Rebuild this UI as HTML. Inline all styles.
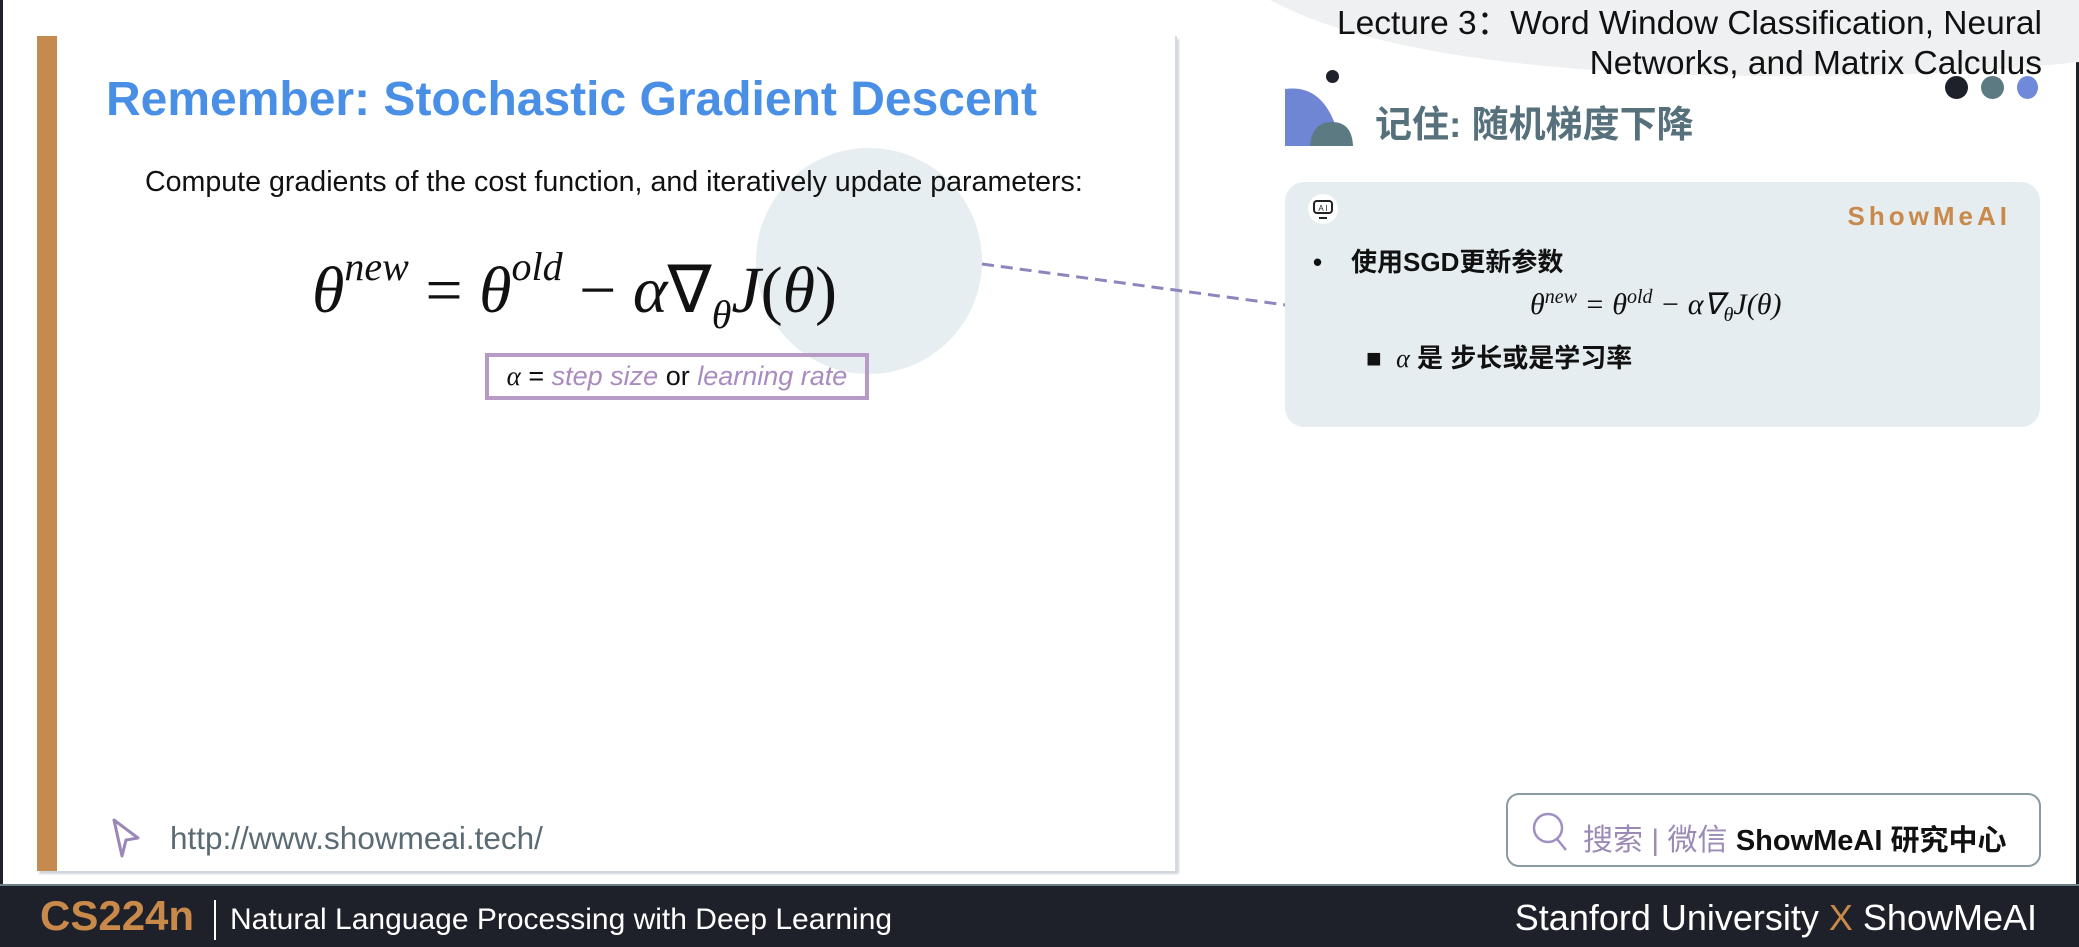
<!DOCTYPE html>
<html><head><meta charset="utf-8"><style>
body{margin:0;width:2079px;height:945px;overflow:hidden;background:#fff;position:relative;font-family:"Liberation Sans","Noto Sans CJK SC",sans-serif}
.a{position:absolute}
</style></head><body>
<div class="a" style="left:0;top:0;width:2079px;height:884px;background:#fff;border-left:3px solid #1e2129;border-right:3px solid #1e2129;box-sizing:border-box"></div>
<svg class="a" style="left:1270px;top:0" width="809" height="100"><path d="M0 0 Q120 65 420 75 Q650 80 809 62 L809 0 Z" fill="#eef0f2"/></svg>
<div class="a" style="left:37px;top:36px;width:1138px;height:835px;background:#fff;box-shadow:2px 3px 2px #cfd6db;border-right:2px solid #d5dbe0"></div>
<div class="a" style="left:37px;top:36px;width:20px;height:835px;background:#c48a50"></div>
<div class="a" style="left:756px;top:148px;width:226px;height:226px;border-radius:50%;background:#e3ebee;opacity:.85"></div>
<div class="a" style="left:106px;top:72px;font-size:48px;font-weight:bold;color:#4a8fe6;white-space:nowrap">Remember: Stochastic Gradient Descent</div>
<div class="a" style="left:145px;top:166px;font-size:28.6px;color:#111;white-space:nowrap">Compute gradients of the cost function, and iteratively update parameters:</div>
<div class="a" style="left:312px;top:243px;font-size:66px;font-family:'Liberation Serif',serif;font-style:italic;color:#111;white-space:nowrap">θ<sup style="font-size:40px;vertical-align:32px">new</sup>&nbsp;<span style="font-style:normal">=</span>&nbsp;θ<sup style="font-size:40px;vertical-align:32px">old</sup>&nbsp;<span style="font-style:normal">−</span>&nbsp;α<span style="font-style:normal">∇</span><sub style="font-size:40px;vertical-align:-16px">θ</sub>J<span style="font-style:normal">(</span>θ<span style="font-style:normal">)</span></div>
<div class="a" style="left:485px;top:353px;width:384px;height:47px;border:4px solid #b79bc6;box-sizing:border-box;font-size:27px;text-align:center;line-height:39px;color:#111;white-space:nowrap"><i style="font-family:'Liberation Serif',serif">α</i> = <i style="color:#a98bc0">step size</i> or <i style="color:#a98bc0">learning rate</i></div>
<svg class="a" style="left:0;top:0" width="1300" height="320"><line x1="982" y1="264" x2="1286" y2="305" stroke="#8c86bd" stroke-width="3" stroke-dasharray="12 7"/></svg>
<svg class="a" style="left:108px;top:816px" width="36" height="46"><path d="M6 4 L30 22 L18 24 L14 40 Z" fill="none" stroke="#9b86b8" stroke-width="3" stroke-linejoin="round"/></svg>
<div class="a" style="left:170px;top:820px;font-size:31.5px;color:#5b6b73;white-space:nowrap">http://www.showmeai.tech/</div>
<div class="a" style="right:37px;top:4px;font-size:33.5px;color:#111;text-align:right;line-height:40px;white-space:nowrap">Lecture 3：Word Window Classification, Neural<br>Networks, and Matrix Calculus</div>
<div class="a" style="left:1945px;top:76px;width:23px;height:23px;border-radius:50%;background:#1e2129"></div>
<div class="a" style="left:1981px;top:76px;width:23px;height:23px;border-radius:50%;background:#5b7a82"></div>
<div class="a" style="left:2017px;top:76px;width:21px;height:23px;border-radius:50%;background:#6f8ad8"></div>
<div class="a" style="left:1326px;top:70px;width:13px;height:13px;border-radius:50%;background:#1e2129"></div>
<svg class="a" style="left:1280px;top:84px" width="90" height="62"><path d="M5 62 L5 5 Q40 0 55 40 L60 62 Z" fill="#6f86d4"/><path d="M30 62 Q32 38 52 38 Q72 38 73 62 Z" fill="#5b7a82"/></svg>
<div class="a" style="left:1375px;top:94px;font-size:37px;font-weight:bold;color:#56707c;white-space:nowrap">记住: 随机梯度下降</div>
<div class="a" style="left:1285px;top:182px;width:755px;height:245px;border-radius:19px;background:#e6edf0"></div>
<svg class="a" style="left:1307px;top:193px" width="32" height="32"><circle cx="16" cy="16" r="15" fill="#fff"/><rect x="7" y="8" width="18" height="12" rx="3" fill="none" stroke="#222" stroke-width="2"/><line x1="12" y1="25" x2="20" y2="25" stroke="#222" stroke-width="2"/><text x="16" y="18" font-size="8" text-anchor="middle" fill="#222" font-family="Liberation Sans">A I</text></svg>
<div class="a" style="right:68px;top:201px;font-size:26px;font-weight:bold;color:#c8894a;letter-spacing:4px;white-space:nowrap">ShowMeAI</div>
<div class="a" style="left:1313px;top:242px;font-size:26px;color:#111;white-space:nowrap;font-weight:bold">•&nbsp;&nbsp;&nbsp;&nbsp;使用SGD更新参数</div>
<div class="a" style="left:1530px;top:286px;font-size:30px;font-family:'Liberation Serif',serif;font-style:italic;color:#111;white-space:nowrap">θ<sup style="font-size:20px">new</sup> = θ<sup style="font-size:20px">old</sup> − α∇<sub style="font-size:20px">θ</sub>J(θ)</div>
<div class="a" style="left:1366px;top:338px;font-size:26px;color:#111;white-space:nowrap;font-weight:bold">■&nbsp;&nbsp;<i style="font-family:'Liberation Serif',serif;font-weight:normal">α</i> 是 步长或是学习率</div>
<div class="a" style="left:1506px;top:793px;width:535px;height:74px;border:2px solid #8a9aa3;border-radius:13px;box-sizing:border-box"></div>
<svg class="a" style="left:1530px;top:808px" width="40" height="46"><circle cx="18" cy="20" r="14" fill="none" stroke="#a08fc0" stroke-width="2.5"/><line x1="27" y1="31" x2="36" y2="42" stroke="#a08fc0" stroke-width="2.5"/></svg>
<div class="a" style="left:1583px;top:815px;font-size:30px;color:#9a8ab5;white-space:nowrap">搜索 | 微信 <b style="color:#111;font-size:29px">ShowMeAI 研究中心</b></div>
<div class="a" style="left:0;top:884px;width:2079px;height:61px;background:#1e2129;border-top:2px solid #6b7f86"></div>
<div class="a" style="left:40px;top:892px;font-size:42px;color:#c8894a;white-space:nowrap;font-weight:bold">CS224n</div>
<div class="a" style="left:214px;top:900px;width:2px;height:40px;background:#fff"></div>
<div class="a" style="left:230px;top:903px;font-size:30px;color:#fff;white-space:nowrap">Natural Language Processing with Deep Learning</div>
<div class="a" style="right:42px;top:897px;font-size:36px;color:#fff;white-space:nowrap">Stanford University <span style="color:#c8894a">X</span> ShowMeAI</div>
</body></html>
